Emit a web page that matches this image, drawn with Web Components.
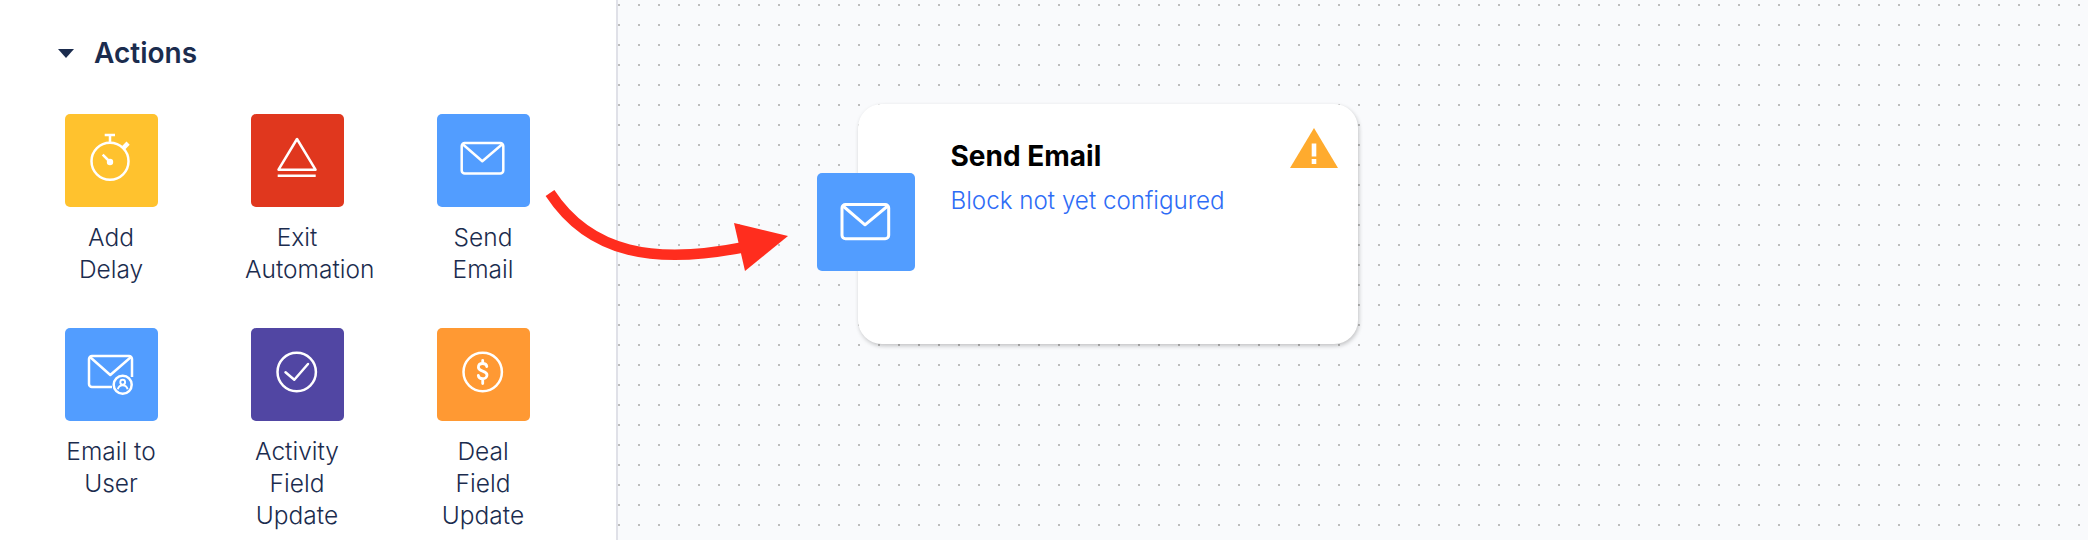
<!DOCTYPE html>
<html>
<head>
<meta charset="utf-8">
<title>Actions</title>
<style>
  html, body { margin: 0; height: 100%; overflow: hidden; }
  body { font-family: "Inter", "Liberation Sans", sans-serif; color: #1b2c4e; }
</style>
</head>
<body>
<automation-builder>
  <action-panel slot="panel" heading="Actions">
    <action-tile color="#ffc22e" icon="timer">Add<br>Delay</action-tile>
    <action-tile color="#e0371e" icon="exit">Exit<br>Automation</action-tile>
    <action-tile color="#529dff" icon="mail">Send<br>Email</action-tile>
    <action-tile color="#529dff" icon="mailUser">Email to<br>User</action-tile>
    <action-tile color="#5146a3" icon="check">Activity<br>Field<br>Update</action-tile>
    <action-tile color="#ff9933" icon="dollar">Deal<br>Field<br>Update</action-tile>
  </action-panel>
  <flow-canvas slot="canvas">
    <flow-node heading="Send Email" status="Block not yet configured"></flow-node>
    <drag-arrow></drag-arrow>
  </flow-canvas>
</automation-builder>

<script>
// icons are drawn on the 93x93 tile
const ICONS = {
  timer: `
    <circle cx="45" cy="47.3" r="18.5"/>
    <path d="M39.7 21H50M45 21v7.5"/>
    <path d="M58.5 33.8l4.6-4.6" stroke-width="4.500"/>
    <path d="M37.7 40.7L45 48"/>
    <circle cx="45" cy="48" r="3.200" fill="#fff" stroke="none"/>`,
  exit: `
    <path d="M46 25L27.5 55.7h37z"/>
    <path d="M26.7 61.7h38"/>`,
  mail: `
    <rect x="24.7" y="29" width="41.6" height="30.4" rx="3"/>
    <path d="M25.5 30l19.8 17.3L65.5 30"/>`,
  mailUser: `
    <path d="M47 59H27a3 3 0 0 1-3-3V31a3 3 0 0 1 3-3h37a3 3 0 0 1 3 3v18"/>
    <path d="M25 29l20.300 18L66 29"/>
    <circle cx="57.700" cy="56.700" r="9" fill="#529dff"/>
    <circle cx="57.700" cy="54.200" r="2.400" stroke-width="1.900"/>
    <path d="M52.800 61.300c.8-2.800 2.600-4 4.900-4s4.100 1.200 4.900 4" stroke-width="1.900"/>`,
  check: `
    <circle cx="45.700" cy="44" r="19.200"/>
    <path d="M34.500 44.300l8.800 7.400L57 36" stroke-linecap="round"/>`,
  dollar: `
    <circle cx="45.700" cy="44" r="19.200"/>
    <path d="M49.800 38.500c-.3-2-2-3-4.100-3-2.500 0-4.300 1.400-4.300 3.800 0 5 8.600 2.500 8.600 7.700 0 2.300-1.900 3.700-4.300 3.700-2.300 0-4.100-1.100-4.400-3.200M45.700 32.500v3M45.700 50.700v4.800" stroke-width="2.800" stroke-linecap="round"/>`
};

class ActionTile extends HTMLElement {
  constructor() {
    super();
    this.attachShadow({ mode: 'open' });
    const COLOR = this.getAttribute('color');
    const ICON = ICONS[this.getAttribute('icon')];
    this.shadowRoot.innerHTML = `
      <style>
        :host { display: flex; flex-direction: column; align-items: center; width: 104px; }
        .box { width: 93px; height: 93px; border-radius: 5px; flex: none; }
        svg { display: block; fill: none; stroke: #fff; stroke-width: 2.500; stroke-linejoin: round; }
        .label { margin-top: 14px; width: 104px; text-align: center; font-size: 24.500px; line-height: 32px; font-weight: 350; color: #1b2c4e; }
      </style>
      <div class="box" style="background:${COLOR}">
        <svg width="93" height="93" viewBox="0 0 93 93">${ICON}</svg>
      </div>
      <div class="label"><slot></slot></div>
    `;
  }
}

class ActionPanel extends HTMLElement {
  constructor() {
    super();
    this.attachShadow({ mode: 'open' });
    this.shadowRoot.innerHTML = `
      <style>
        :host { display: block; box-sizing: border-box; width: 618px; height: 540px; background: #fff; border-right: 2px solid #e0e1e8; padding: 37px 0 0 58px; overflow: hidden; }
        .head { display: flex; align-items: center; gap: 20px; height: 33px; }
        .caret { width: 0; height: 0; border-left: 8px solid transparent; border-right: 8px solid transparent; border-top: 9px solid #1b2c4e; }
        h2 { margin: 0; font-size: 28px; line-height: 33px; font-weight: 600; color: #1b2c4e; }
        .grid { display: grid; grid-template-columns: repeat(3, 104px); column-gap: 82px; grid-auto-rows: 214px; margin: 44px 0 0 1px; }
      </style>
      <div class="head"><span class="caret"></span><h2>${this.getAttribute('heading')}</h2></div>
      <div class="grid"><slot></slot></div>
    `;
  }
}

class FlowNode extends HTMLElement {
  constructor() {
    super();
    this.attachShadow({ mode: 'open' });
    this.shadowRoot.innerHTML = `
      <style>
        :host { position: absolute; left: 240px; top: 104px; box-sizing: border-box; width: 500px; height: 240px; padding: 35px 0 0 92.500px; background: #fff; border-radius: 24px; box-shadow: 1px 2px 4px rgba(0,0,0,.22); }
        .tile { position: absolute; left: -41px; top: 69px; width: 98px; height: 98px; border-radius: 5px; background: #529dff; }
        .tile svg { display: block; fill: none; stroke: #fff; stroke-width: 3; stroke-linejoin: round; }
        .warn { position: absolute; left: 432px; top: 24px; display: block; }
        h3 { margin: 0; font-size: 28px; line-height: 34px; font-weight: 700; color: #000; }
        p { margin: 12px 0 0; font-size: 24.200px; line-height: 32px; font-weight: 350; color: #2e6cf6; }
      </style>
      <div class="tile">
        <svg width="98" height="98" viewBox="0 0 98 98">
          <rect x="25" y="31.600" width="46.700" height="34.200" rx="3.500"/>
          <path d="M26 33l22 18.800L70.700 33"/>
        </svg>
      </div>
      <h3>${this.getAttribute('heading')}</h3>
      <p>${this.getAttribute('status')}</p>
      <svg class="warn" width="48" height="40" viewBox="0 0 48 40">
        <path d="M24 0L48 40H0z" fill="#ffab2e"/>
        <path d="M21.700 15.500h4.600v13h-4.600zM21.700 31h4.600v5h-4.600z" fill="#fff"/>
      </svg>
    `;
  }
}

class DragArrow extends HTMLElement {
  constructor() {
    super();
    this.attachShadow({ mode: 'open' });
    this.shadowRoot.innerHTML = `
      <style>
        :host { position: absolute; left: -68px; top: 190px; width: 240px; height: 82px; pointer-events: none; }
        svg { display: block; overflow: visible; }
      </style>
      <svg width="240" height="82" viewBox="0 0 240 82">
        <path d="M0 3C40 64 105 75 195 57" fill="none" stroke="#ff2d1e" stroke-width="10.500"/>
        <path d="M184 33L238 46L195 81z" fill="#ff2d1e"/>
      </svg>
    `;
  }
}

class FlowCanvas extends HTMLElement {
  constructor() {
    super();
    this.attachShadow({ mode: 'open' });
    this.shadowRoot.innerHTML = `
      <style>
        :host { display: block; position: relative; flex: 1; height: 540px; background-color: #f9fafc;
          background-image: radial-gradient(circle at 1px 1px, #bdbdbd 1.4px, transparent 1.4px);
          background-size: 20px 20px; background-position: 0 4px; }
      </style>
      <slot></slot>
    `;
  }
}

class AutomationBuilder extends HTMLElement {
  constructor() {
    super();
    this.attachShadow({ mode: 'open' });
    this.shadowRoot.innerHTML = `
      <style>
        :host { display: flex; width: 2088px; height: 540px; overflow: hidden; }
      </style>
      <slot name="panel"></slot>
      <slot name="canvas"></slot>
    `;
  }
}

customElements.define('action-tile', ActionTile);
customElements.define('action-panel', ActionPanel);
customElements.define('flow-node', FlowNode);
customElements.define('drag-arrow', DragArrow);
customElements.define('flow-canvas', FlowCanvas);
customElements.define('automation-builder', AutomationBuilder);
</script>
</body>
</html>
